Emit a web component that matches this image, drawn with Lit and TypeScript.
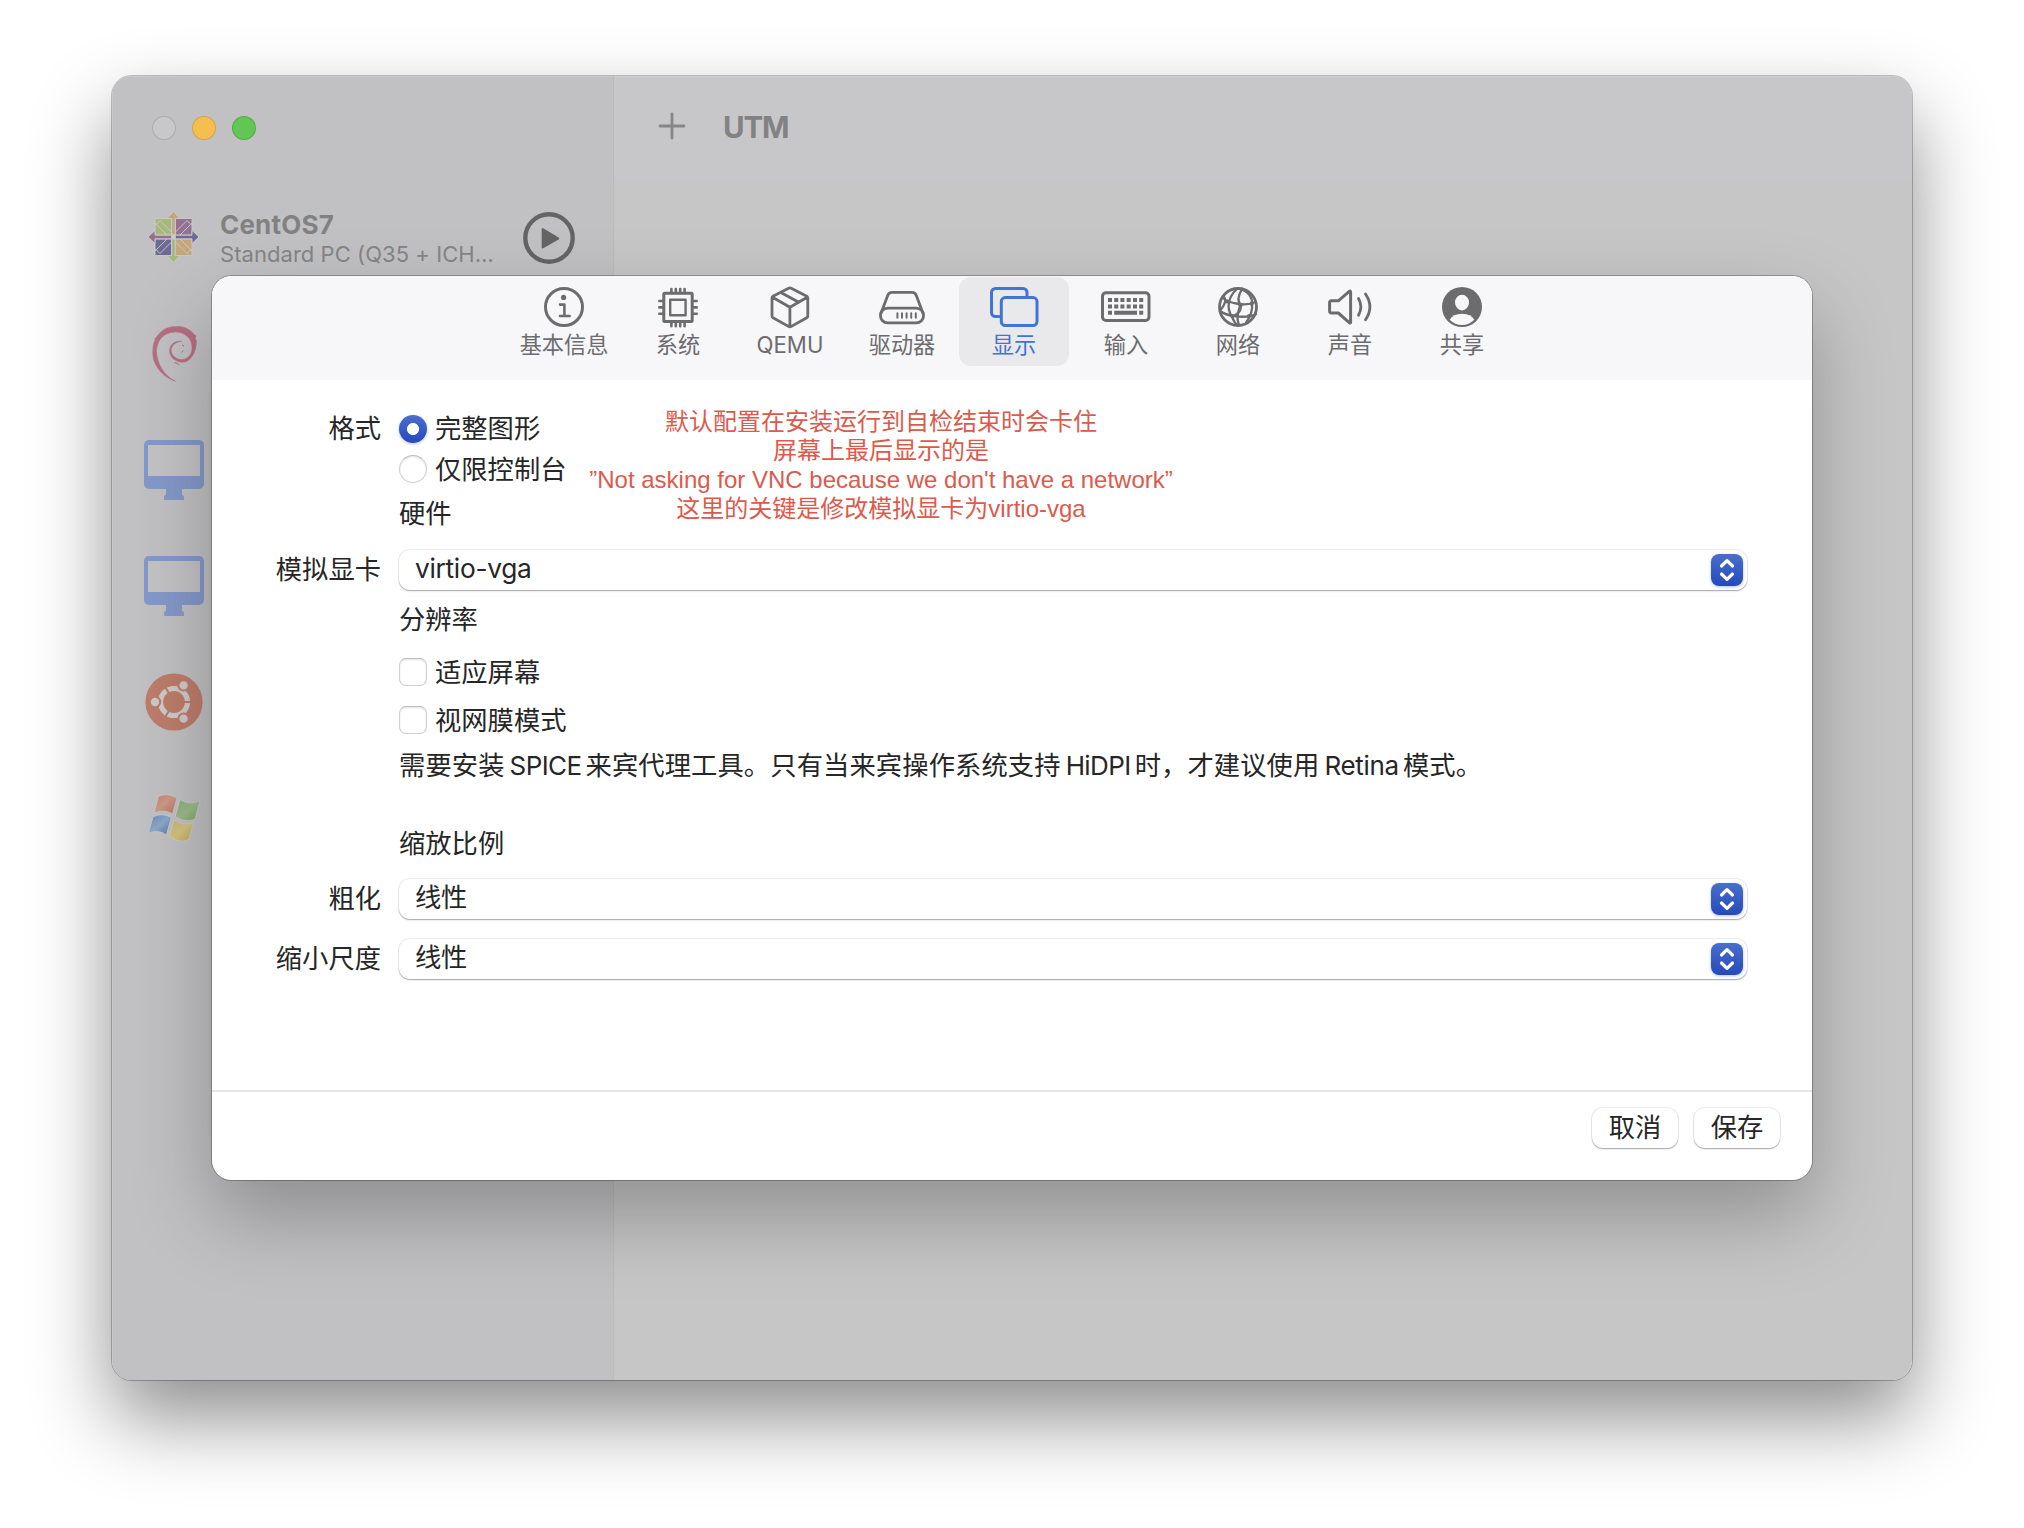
import { LitElement, html, css, svg } from "lit";
import { customElement, property } from "lit/decorators.js";
import { classMap } from "lit/directives/class-map.js";

const FONT = css`Inter, "Noto Sans CJK SC", sans-serif`;

const tabIcons: Record<string, unknown> = {
  info: svg`<circle cx="26" cy="22" r="18.5" stroke-width="3"/><circle class="solid" cx="25.6" cy="12.4" r="2.6"/><path stroke-width="2.6" d="M22 19.6h4.4v11.4M22 31h9.6"/>`,
  chip: svg`<rect x="11.8" y="8.2" width="28.4" height="28.4" rx="1" stroke-width="3"/><rect x="18.2" y="14.8" width="15.4" height="15.4" stroke-width="2.4"/><path stroke-width="2.6" d="M19.4 4v3.5M23.8 4v3.5M28.2 4v3.5M32.6 4v3.5M19.4 37.5v3.8M23.8 37.5v3.8M28.2 37.5v3.8M32.6 37.5v3.8M7.3 16h3.5M7.3 22.4h3.5M7.3 28.8h3.5M41.2 16h3.5M41.2 22.4h3.5M41.2 28.8h3.5"/>`,
  box: svg`<path stroke-width="2.8" d="M24.6 3.2a2.5 2.5 0 0 1 2.6 0L42.8 11.2a2 2 0 0 1 1 1.7V31a2 2 0 0 1-1 1.7L26.9 41.6a2 2 0 0 1-2 0L9 32.7A2 2 0 0 1 8 31V12.9a2 2 0 0 1 1-1.7ZM8.5 12.3L25.9 22.3L43.3 12.3M25.9 22.3V41.5M16.8 7.4L34.8 17.2"/>`,
  drive: svg`<rect x="4.4" y="23.2" width="43.2" height="14.6" rx="7.3" stroke-width="2.8"/><path stroke-width="2.8" d="M4.9 28.5L11.8 10.3Q13 7.4 16 7.4H36Q39 7.4 40.2 10.3L47.1 28.5"/><path stroke-width="2" d="M21.4 28.3v4.4M26 28.3v4.4M30.6 28.3v4.4M35.2 28.3v4.4M39.8 28.3v4.4"/>`,
  display: svg`<path stroke-width="3" d="M11 31.6H7.5a4 4 0 0 1-4-4V7.5a4 4 0 0 1 4-4H35a4 4 0 0 1 4 4V12"/><rect x="13.3" y="12.6" width="35.7" height="28" rx="4" stroke-width="3"/>`,
  keyboard: svg`<rect x="2.5" y="7.7" width="46.5" height="27.8" rx="3.5" stroke-width="3"/><path class="solid" d="M8 13h4v4h-4zM14.2 13h4v4h-4zM20.4 13h4v4h-4zM26.7 13h4v4h-4zM33 13h4v4h-4zM39.2 13h4v4h-4zM8 19.4h4v4h-4zM14.2 19.4h4v4h-4zM20.4 19.4h4v4h-4zM26.7 19.4h4v4h-4zM33 19.4h4v4h-4zM39.2 19.4h4v4h-4zM8 25.8h4v4h-4zM14.2 25.8h22.8v4H14.2zM39.2 25.8h4v4h-4z"/>`,
  globe: svg`<circle cx="26" cy="22" r="18.5" stroke-width="2.8"/><path stroke-width="2.3" d="M25 4C17 11 13.5 22 20 32Q22 37 25 40M30 4C26.5 10 25 16 28.5 20C30 26 25 30 20.5 31M29 4C36 7 40.5 12 40 19C41 26 38 32 34 38M28.5 20C26 27 24 33 27 40M11 13C16 18 34 22 43.5 17M8 26C15 31.5 34 34 44 29M12 12C15 15 12 21 8.5 25"/><circle class="solid" cx="28.5" cy="20" r="2.3"/><circle class="solid" cx="20.5" cy="31" r="2.1"/><circle class="solid" cx="39.7" cy="18.8" r="2.1"/><circle class="solid" cx="37" cy="31" r="2"/><circle class="solid" cx="15" cy="16.5" r="2"/>`,
  sound: svg`<path stroke-width="3" d="M7.5 15.8H14.3L25.3 6.3Q26.6 5.3 26.6 7V37Q26.6 38.7 25.3 37.7L14.3 28H7.5Q5.6 28 5.6 26V17.8Q5.6 15.8 7.5 15.8Z"/><path stroke-width="2.8" d="M34.5 13.5Q39.2 21.9 34.5 30.3M41.5 9Q50.3 21.9 41.5 34.8"/>`,
  person: svg`<circle class="solid" cx="26" cy="22" r="20"/><ellipse class="hole" cx="26" cy="17.6" rx="7" ry="7.8"/><path class="hole" d="M13.7 34.8Q17 28.8 26 28.8T38.3 34.8Q33 40 26 40T13.7 34.8Z"/>`,
};

const machineIcons: Record<string, unknown> = {
  centos: svg`<g transform="translate(4 5)"><g stroke="#cbcbcc" stroke-width=".9">
    <path fill="#a7b87c" d="M7 7.5h16.5V24H7z"/><path fill="#96708f" d="M27.5 7.5H44V24H27.5z"/>
    <path fill="#6b6b94" d="M7 28h16.5v16.5H7z"/><path fill="#c4a77c" d="M27.5 28H44v16.5H27.5z"/>
    <path fill="#c4a77c" d="M25.5 .5L32 7.5H27.3V24H23.7V7.5H19Z"/><path fill="#96708f" d="M0 26L7 19.5V24.2H24V27.8H7V32.5Z"/>
    <path fill="#6b6b94" d="M51 26L44 19.5V24.2H27V27.8H44V32.5Z"/><path fill="#a7b87c" d="M25.5 51.5L32 44.5H27.3V28H23.7V44.5H19Z"/>
    <path fill="none" d="M7 14.5L12 9.5L23.5 21M7 12L19 24M44 14.5L39 9.5L27.5 21M44 12L32 24M7 37.5L12 42.5L23.5 31M7 40L19 28M44 37.5L39 42.5L27.5 31M44 40L32 28"/></g><circle cx="25.5" cy="26" r="2.4" fill="#cbcbcc"/></g>`,
  debian: svg`<g transform="translate(4.5 0)" fill="#b56f80"><path stroke="#b56f80" stroke-width=".5" d="M27 59.3C14 55 3.5 43 4.3 29C4.5 15 14 4.7 26 4.7L31 4.4C39 5.5 43 9 45.6 12.5L47.6 13.8L46.7 16L47.9 19C48 28 44.5 36 38 39.5C30 42 21.5 37 21 29C21.5 22 26 18.8 33 19.3C26 20.3 22.7 24 22.7 29C23.5 35 30 39 36.500 37C42 34.5 44.300 30 43.300 23C42.5 16 36 10 27 10C14 10.500 8.500 19 8 29C8.300 42 16 54 27 59.300Z"/><path d="M33.5 23l2 1M35 28.5l-2 2M26 40.5l5 2M6 17.5l1.5-2" stroke="#b56f80" stroke-width="1"/></g>`,
  monitor: svg`<g transform="translate(0 2)"><rect x="3" y="3" width="54" height="36" fill="#c3c3c5"/><path fill="#8499ca" fill-rule="evenodd" d="M5 0H55a5 5 0 0 1 5 5V44a5 5 0 0 1-5 5H38V54.5Q40 55.5 40 57.5V60H20V57.5Q20 55.5 22 54.5V49H5a5 5 0 0 1-5-5V5a5 5 0 0 1 5-5ZM4 5V36H56V5Z"/></g>`,
  ubuntu: svg`<g transform="translate(30 32)"><circle r="28.6" fill="#bd7d6b"/><circle r="13.5" fill="none" stroke="#cdcac9" stroke-width="5.2"/><path stroke="#bd7d6b" stroke-width="2" d="M9 0H18M-4.5-7.8L-9-15.6M-4.5 7.8L-9 15.6"/><g fill="#cdcac9" stroke="#bd7d6b" stroke-width="2"><circle cx="-19" r="5.2"/><circle cx="9.6" cy="-16.6" r="5.2"/><circle cx="9.6" cy="16.6" r="5.2"/></g></g>`,
  windows: svg`<defs><linearGradient id="r" x2="1" y2="1"><stop stop-color="#be8377"/><stop offset=".45" stop-color="#cb9b86"/><stop offset="1" stop-color="#ba7261"/></linearGradient><linearGradient id="g" x2="1" y2="1"><stop stop-color="#88ab74"/><stop offset=".5" stop-color="#9dba8b"/><stop offset="1" stop-color="#7fa668"/></linearGradient><linearGradient id="b" x2="1" y2="1"><stop stop-color="#6585b4"/><stop offset=".5" stop-color="#8fa8c8"/><stop offset="1" stop-color="#5277ad"/></linearGradient><linearGradient id="y" x2="1" y2="1"><stop stop-color="#c8b467"/><stop offset=".5" stop-color="#d2c484"/><stop offset="1" stop-color="#c3a850"/></linearGradient></defs>
    <g transform="translate(4 8)" stroke="#cbcbcb" stroke-width=".8"><path fill="url(#r)" d="M10.3 2.5C17-.5 23 .5 29 4L24.5 20C18 16 12 16.5 6 19.5Z"/><path fill="url(#g)" d="M32 5.5C38 9.5 45 10 52 6.5L47 25C40 28 33 26.5 27.3 22.5Z"/><path fill="url(#b)" d="M5 23C11 20 17 20 23.3 23.5L18.3 41C13 37 6.5 36.5 .3 39.5Z"/><path fill="url(#y)" d="M26 26C32 30 39 31 46 28L40.7 45.5C34 48.5 27 47 21.3 42.5Z"/></g>`,
};

@customElement("tab-button")
class TabButton extends LitElement {
  @property() icon = "";
  @property() label = "";
  @property({ type: Boolean }) active = false;
  static styles = css`
    :host { display: block; }
    .tab { box-sizing: border-box; width: 110px; height: 89px; padding-top: 8px; border-radius: 12px; display: flex; flex-direction: column; align-items: center; color: #6c6c6e; font: 22.2px/31px ${FONT}; }
    .active { background: #e9e9eb; color: #4273d6; }
    svg { width: 52px; height: 44px; overflow: visible; fill: none; stroke: currentColor; stroke-linecap: round; stroke-linejoin: round; flex: none; }
    .solid { fill: currentColor; stroke: none; }
    .hole { fill: #f7f7f9; stroke: none; }
    .name { white-space: nowrap; }
  `;
  render() {
    return html`<div class=${classMap({ tab: true, active: this.active })}>
      <svg viewBox="0 0 52 44">${tabIcons[this.icon]}</svg>
      <span class="name">${this.label}</span>
    </div>`;
  }
}

@customElement("popup-select")
class PopupSelect extends LitElement {
  @property() value = "";
  static styles = css`
    :host { display: block; }
    .select { box-sizing: border-box; width: 1348px; height: 40px; padding: 0 4px 0 16px; display: flex; align-items: center; justify-content: space-between; border-radius: 11px; background: #fff; box-shadow: 0 0 0 1px rgba(0,0,0,.08), 0 1px 1px rgba(0,0,0,.22), 0 2px 2px rgba(0,0,0,.06); font: 26.3px/38px ${FONT}; color: #262626; }
    .value { letter-spacing: -.3px; padding-bottom: 2px; }
    svg { width: 32px; height: 32px; border-radius: 8px; background: linear-gradient(#4a6fcc, #2549bb); box-shadow: 0 1px 3px rgba(40,80,200,.35); fill: none; stroke: #fff; stroke-width: 3.2; stroke-linecap: round; stroke-linejoin: round; }
  `;
  render() {
    return html`<div class="select"><span class="value">${this.value}</span>
      <svg viewBox="0 0 32 32"><path d="M10.5 12L16 6.6L21.5 12M10.5 20L16 25.4L21.5 20"/></svg></div>`;
  }
}

@customElement("app-root")
class AppRoot extends LitElement {
  static styles = css`
    :host { display: block; width: 2024px; height: 1528px; overflow: hidden; background: #fff; font-family: ${FONT}; color: #262626; }
    .stage { box-sizing: border-box; width: 2024px; height: 1528px; padding: 76px 112px; position: relative; }
    .window { width: 1800px; height: 1304px; display: flex; border-radius: 20px; background: #c6c6c6; overflow: hidden; }
    .shadow { border-radius: 20px; width: 1800px; height: 1304px; box-shadow: 0 0 0 1px rgba(0,0,0,.24), 0 38px 80px rgba(0,0,0,.45); }
    .sidebar { box-sizing: border-box; width: 502px; height: 1304px; padding: 40px 0 0 32px; background: #c1c1c3; border-right: 1px solid #bababb; box-shadow: inset 1px 1px 0 #cbcbcc; }
    .lights { display: flex; gap: 16px; padding-left: 8px; height: 24px; }
    .light { box-sizing: border-box; width: 24px; height: 24px; border-radius: 50%; border: 1px solid rgba(0,0,0,.14); }
    .close { background: #c8c8ca; } .mini { background: #f5bf4f; } .zoom { background: #62c655; }
    .machines { padding-top: 40px; }
    .machine { height: 116px; display: flex; align-items: center; }
    .logo { width: 60px; height: 64px; flex: none; }
    .info { width: 281px; margin-left: 16px; padding-top: 1px; white-space: nowrap; }
    .name { font-size: 26px; line-height: 32px; font-weight: 700; color: #818182; letter-spacing: .2px; }
    .desc { font-size: 22px; line-height: 27px; color: #858586; letter-spacing: .05px; }
    .play { width: 52px; height: 52px; margin-left: 22px; flex: none; }
    .content { flex: 1; }
    .topbar { box-sizing: border-box; height: 104px; display: flex; align-items: center; padding: 0 0 4px 44px; gap: 37px; background: #c7c7c9; box-shadow: inset 0 1px 0 #cfcfd0; }
    .topbar svg { width: 28px; height: 28px; }
    .title { font-size: 29.5px; font-weight: 650; color: #828283; line-height: 40px; letter-spacing: -1.2px; padding-top: 2px; }
    .dialog { position: absolute; left: 212px; top: 276px; width: 1600px; height: 904px; border-radius: 20px; background: #fff; overflow: hidden; display: flex; flex-direction: column; }
    .dialog-shadow { position: absolute; left: 212px; top: 276px; width: 1600px; height: 904px; border-radius: 20px; box-shadow: 0 0 0 1px rgba(0,0,0,.26), 0 36px 80px rgba(0,0,0,.27); }
    .tabs { box-sizing: border-box; height: 104px; background: #f7f7f9; display: flex; gap: 2px; padding: 1px 0 0 297px; }
    .first { margin-right: 2px; }
    .form { flex: 1; padding-top: 29px; position: relative; }
    .row { display: grid; grid-template-columns: 169px 1fr; column-gap: 18px; align-items: center; height: 40px; font-size: 26.3px; line-height: 38px; white-space: nowrap; }
    .row.tall { height: 48px; }
    .label { text-align: right; }
    .control { display: flex; align-items: center; }
    .low { padding-top: 2px; }
    .radio, .check { box-sizing: border-box; width: 28px; height: 28px; margin-right: 8px; border: 1px solid #cfcfcf; border-top-color: #bdbdbd; box-shadow: inset 0 1px 2px rgba(0,0,0,.12); }
    .radio { border-radius: 50%; } .check { border-radius: 7px; }
    .radio.on { border: 0; background: radial-gradient(circle, #fff 0 5.6px, transparent 6.4px), linear-gradient(#4a6fcc, #2549bb); box-shadow: 0 1px 3px rgba(40,80,200,.35); }
    .s6 { margin-top: 6px; } .s13 { margin-top: 13px; } .s4 { margin-top: 4px; } .s11 { margin-top: 11px; } .s20 { margin-top: 20px; } .s30 { margin-top: 30px; } .up { margin-top: -2px; }
    .latin { margin: 0 4px 0 5px; font-size: 26px; letter-spacing: -.6px; }
    .retina { margin: 0 4px 0 5px; font-size: 26px; letter-spacing: -.3px; }
    .help { letter-spacing: .1px; }
    .note { position: absolute; left: 369px; top: 27px; width: 600px; text-align: center; color: #dc5a4c; font: 24px/29px "Liberation Sans", "Noto Sans CJK SC", sans-serif; white-space: nowrap; }
    .footer { box-sizing: border-box; height: 90px; border-top: 2px solid #e5e5e5; display: flex; justify-content: flex-end; gap: 16px; padding: 16px 32px 0 0; }
    .button { width: 86px; height: 40px; border-radius: 11px; text-align: center; font-size: 26.3px; line-height: 39px; background: #fff; box-shadow: 0 0 0 1px rgba(0,0,0,.08), 0 1px 1px rgba(0,0,0,.22), 0 2px 2px rgba(0,0,0,.06); }
  `;

  machines = ["centos", "debian", "monitor", "monitor", "ubuntu", "windows"];
  tabs: [string, string][] = [
    ["info", "基本信息"], ["chip", "系统"], ["box", "QEMU"], ["drive", "驱动器"], ["display", "显示"],
    ["keyboard", "输入"], ["globe", "网络"], ["sound", "声音"], ["person", "共享"],
  ];
  notes = ["默认配置在安装运行到自检结束时会卡住", "屏幕上最后显示的是", "”Not asking for VNC because we don't have a network”", "这里的关键是修改模拟显卡为virtio-vga"];

  machine(icon: string, index: number) {
    return html`<div class="machine"><svg class="logo" viewBox="0 0 60 64">${machineIcons[icon]}</svg>
      ${index === 0 ? html`<div class="info"><div class="name">CentOS7</div><div class="desc">Standard PC (Q35 + ICH…</div></div>
        <svg class="play" viewBox="0 0 52 52"><circle cx="26" cy="26" r="23.7" fill="none" stroke="#646465" stroke-width="4.4"/><path fill="#646465" d="M18.7 17V35.5Q18.7 37 20.2 36.2L35.7 27.4Q37 26.5 35.7 25.6L20.2 16.2Q18.7 15.4 18.7 17Z"/></svg>` : ""}
    </div>`;
  }

  render() {
    return html`<div class="stage">
      <div class="shadow"><div class="window">
        <div class="sidebar">
          <div class="lights"><span class="light close"></span><span class="light mini"></span><span class="light zoom"></span></div>
          <div class="machines">${this.machines.map((m, i) => this.machine(m, i))}</div>
        </div>
        <div class="content"><div class="topbar">
          <svg viewBox="0 0 28 28"><path d="M14 2V26M2 14H26" stroke="#868687" stroke-width="2.8" stroke-linecap="round"/></svg>
          <span class="title">UTM</span>
        </div></div>
      </div></div>
      <div class="dialog-shadow"></div>
      <div class="dialog">
        <div class="tabs">${this.tabs.map(([icon, label], i) => html`<tab-button class=${i === 0 ? "first" : ""} .icon=${icon} .label=${label} ?active=${icon === "display"}></tab-button>`)}</div>
        <div class="form">
          <div class="row"><span class="label">格式</span><div class="control"><span class="radio on"></span><span>完整图形</span></div></div>
          <div class="row"><span></span><div class="control"><span class="radio"></span><span class="low">仅限控制台</span></div></div>
          <div class="row tall"><span></span><span class="low">硬件</span></div>
          <div class="row s13"><span class="label">模拟显卡</span><popup-select value="virtio-vga"></popup-select></div>
          <div class="row tall s6"><span></span><span>分辨率</span></div>
          <div class="row tall s4"><span></span><div class="control"><span class="check"></span><span class="low">适应屏幕</span></div></div>
          <div class="row tall"><span></span><div class="control"><span class="check"></span><span class="low">视网膜模式</span></div></div>
          <div class="row tall up"><span></span><span class="help">需要安装<span class="latin">SPICE</span>来宾代理工具。只有当来宾操作系统支持<span class="latin">HiDPI</span>时，才建议使用<span class="retina">Retina</span>模式。</span></div>
          <div class="row tall s30"><span></span><span>缩放比例</span></div>
          <div class="row s11"><span class="label">粗化</span><popup-select value="线性"></popup-select></div>
          <div class="row s20"><span class="label">缩小尺度</span><popup-select value="线性"></popup-select></div>
          <div class="note">${this.notes.map((n) => html`<div>${n}</div>`)}</div>
        </div>
        <div class="footer"><div class="button">取消</div><div class="button">保存</div></div>
      </div>
    </div>`;
  }
}
